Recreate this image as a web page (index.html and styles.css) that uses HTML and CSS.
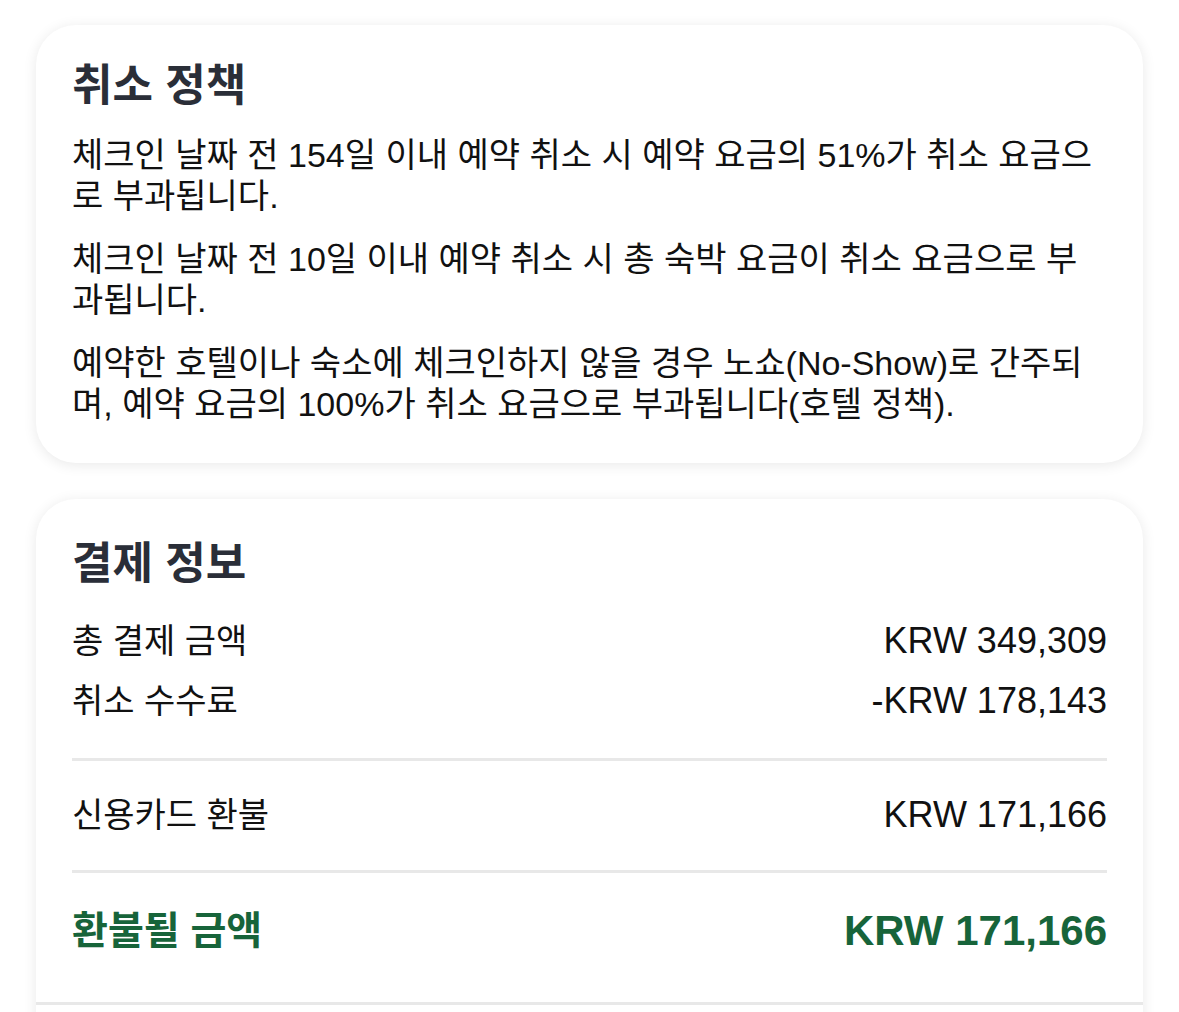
FILE: index.html
```html
<!DOCTYPE html>
<html lang="ko">
<head>
<meta charset="utf-8">
<link rel="stylesheet" href="styles.css">
</head>
<body>
<div class="page">
  <section class="card policy">
    <h2 class="card-title">취소 정책</h2>
    <p class="para">체크인 날짜 전 154일 이내 예약 취소 시 예약 요금의 51%가 취소 요금으로 부과됩니다.</p>
    <p class="para">체크인 날짜 전 10일 이내 예약 취소 시 총 숙박 요금이 취소 요금으로 부과됩니다.</p>
    <p class="para">예약한 호텔이나 숙소에 체크인하지 않을 경우 노쇼(No-Show)로 간주되며, 예약 요금의 100%가 취소 요금으로 부과됩니다(호텔 정책).</p>
  </section>
  <section class="card payment">
    <h2 class="card-title">결제 정보</h2>
    <div class="rows">
      <div class="row"><span class="label">총 결제 금액</span><span class="amount">KRW 349,309</span></div>
      <div class="row"><span class="label">취소 수수료</span><span class="amount">-KRW 178,143</span></div>
    </div>
    <div class="rows divided">
      <div class="row"><span class="label">신용카드 환불</span><span class="amount">KRW 171,166</span></div>
    </div>
    <div class="rows divided total-wrap">
      <div class="row total"><span class="label">환불될 금액</span><span class="amount">KRW 171,166</span></div>
    </div>
    <div class="card-foot"></div>
  </section>
</div>
</body>
</html>
```
FILE: styles.css
```css
* { box-sizing: border-box; }
html, body { margin: 0; padding: 0; background: #ffffff; }
body {
  font-family: "Liberation Sans", "Noto Sans CJK KR", sans-serif;
  color: #111111;
}
.page {
  padding: 25px 36px 0 36px;
  display: flex;
  flex-direction: column;
  gap: 36px;
}
.card {
  background: #ffffff;
  border-radius: 40px;
  box-shadow: 0 2px 14px rgba(0, 0, 0, 0.09);
  padding: 37px 36px 38px;
}
.card-title {
  margin: 0;
  font-size: 44px;
  line-height: 48px;
  font-weight: 700;
  color: #2a2e38;
}
.policy .card-title { margin-bottom: 25px; }
.para {
  margin: 0 0 22px;
  font-size: 34px;
  line-height: 41px;
}
.para:last-child { margin-bottom: 0; }
.payment {
  padding-top: 41px;
  padding-bottom: 0;
  border-bottom-left-radius: 0;
  border-bottom-right-radius: 0;
}
.rows {
  display: flex;
  flex-direction: column;
  gap: 20px;
  padding: 33px 0 37px;
}
.divided { border-top: 3px solid #e8e8e8; padding: 34px 0 35px; }
.row {
  display: flex;
  justify-content: space-between;
  align-items: center;
  font-size: 34px;
  line-height: 40px;
}
.amount { font-size: 36px; }
.total-wrap { padding: 34px 0 47px; }
.row.total { line-height: 48px; font-weight: 700; color: #17643a; }
.row.total .label { font-size: 39px; }
.row.total .amount { font-size: 42px; }
.card-foot {
  margin: 0 -36px;
  border-top: 3px solid #e8e8e8;
  height: 40px;
}
```
